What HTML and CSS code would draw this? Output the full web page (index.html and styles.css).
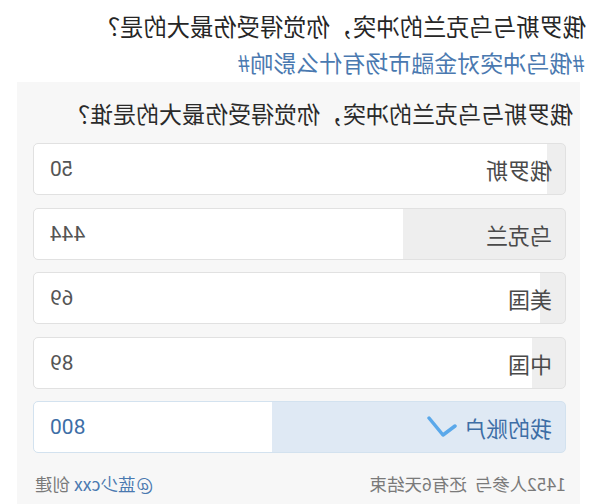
FILE: index.html
```html
<!DOCTYPE html>
<html lang="zh">
<head>
<meta charset="utf-8">
<link rel="stylesheet" href="styles.css">
</head>
<body>
<div class="page">
  <div class="title">俄罗斯与乌克兰的冲突，你觉得受伤最大的是？</div>
  <div class="tag">#俄乌冲突对金融市场有什么影响#</div>
  <div class="card">
    <div class="question">俄罗斯与乌克兰的冲突，你觉得受伤最大的是谁？</div>
    <div class="options">
      <div class="opt" style="--p:3.44%"><span class="label">俄罗斯</span><span class="val">50</span></div>
      <div class="opt" style="--p:30.58%"><span class="label">乌克兰</span><span class="val">444</span></div>
      <div class="opt" style="--p:4.75%"><span class="label">美国</span><span class="val">69</span></div>
      <div class="opt" style="--p:6.13%"><span class="label">中国</span><span class="val">89</span></div>
      <div class="opt mine" style="--p:55.10%"><span class="label">我的账户<svg class="check" width="30" height="22" viewBox="0 0 30 22"><path d="M2 10 L14 19 L28 2" fill="none" stroke="#5aa8ea" stroke-width="3.5" stroke-linecap="round" stroke-linejoin="round"/></svg></span><span class="val">800</span></div>
    </div>
    <div class="footer">
      <span class="stats">1452人参与&nbsp;&nbsp;还有6天结束</span>
      <span class="creator"><span class="at">@</span><span class="name">蓝少cxx</span> 创建</span>
    </div>
  </div>
</div>
</body>
</html>
```
FILE: styles.css
```css
html, body {
  margin: 0;
  padding: 0;
  background: #ffffff;
}
body {
  width: 600px;
  height: 504px;
  overflow: hidden;
  font-family: "Noto Sans CJK SC", "Noto Sans", sans-serif;
}
.page {
  width: 600px;
  height: 504px;
  transform: scaleX(-1);
  padding-top: 8px;
  box-sizing: border-box;
}
.title {
  padding-left: 14px;
  font-size: 23.3px;
  line-height: 36px;
  color: #262626;
}
.tag {
  padding-left: 15px;
  font-size: 23px;
  line-height: 36px;
  color: #4a79b0;
}
.card {
  margin: 2px 0 0 20px;
  width: 563px;
  height: 430px;
  background: #f7f7f7;
  box-sizing: border-box;
  padding: 13px 16px 0 7px;
}
.question {
  font-size: 23px;
  line-height: 36px;
  color: #2a2a2a;
}
.options {
  margin: 12px 0 0 7px;
  display: flex;
  flex-direction: column;
  gap: 12.5px;
}
.opt {
  height: 52px;
  box-sizing: border-box;
  border: 1px solid #e1e1e1;
  border-radius: 5px;
  background: linear-gradient(to right, #eeeeee var(--p), #ffffff var(--p));
  display: flex;
  align-items: center;
  justify-content: space-between;
  padding: 0 16px 0 13px;
  font-size: 22px;
  color: #4a4a4a;
}
.label {
  display: flex;
  align-items: center;
}
.val {
  color: #555555;
  font-family: "Roboto", "Noto Sans", sans-serif;
  font-size: 21px;
}
.opt.mine {
  border-color: #d3e2ef;
  background: linear-gradient(to right, #dfe9f4 var(--p), #ffffff var(--p));
}
.opt.mine .label,
.opt.mine .val {
  color: #3d6ea6;
}
.check {
  margin-left: 7px;
}
.footer {
  margin-top: 16px;
  margin-left: 7px;
  display: flex;
  justify-content: space-between;
  font-size: 17.5px;
  line-height: 30px;
  color: #7a7a7a;
  padding: 0 2px 0 0;
}
.creator {
  display: flex;
  align-items: center;
}
.at {
  color: #4a79b0;
  margin-right: 1px;
}
.name {
  color: #4a79b0;
  margin-right: 4px;
}
```
